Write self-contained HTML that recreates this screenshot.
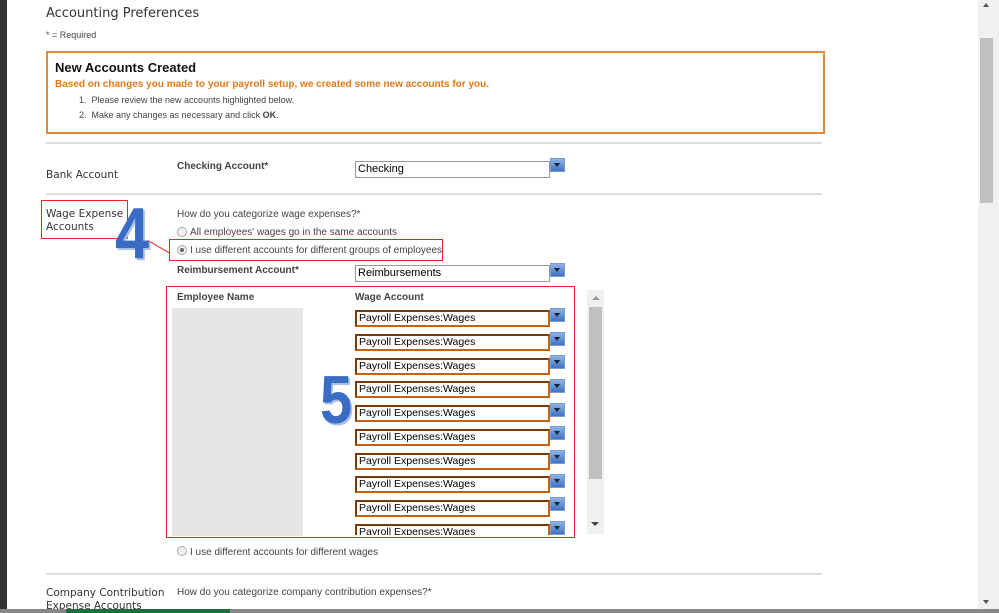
<!DOCTYPE html><html><head><style>
body{margin:0;width:999px;height:613px;overflow:hidden;background:#fff;font-family:"Liberation Sans",Arial,sans-serif;position:relative}
.a{position:absolute}
.s{font-size:10px;color:#444}
.lbl{font-size:10.5px;color:#333;font-family:"DejaVu Sans",sans-serif}
.hr{position:absolute;left:46px;width:776px;height:2px;background:#ddd}
.sel{position:absolute;left:355px;width:191px;height:15px;border:1px solid #999;font-size:11px;line-height:15px;padding-left:2px;color:#000}
.o{border:2px solid #c5620c;border-top-color:#7a3a0a;border-left-color:#7a3a0a;height:13px;width:189px;line-height:13px;font-size:10.5px}
.btn{position:absolute;left:550px;width:13px;height:12px;background:linear-gradient(#8fb3e6,#3f72c4);border:1px solid #7a9ccc}
.btn:after{content:"";position:absolute;left:3px;top:4px;border:3.5px solid transparent;border-top:4px solid #123;border-bottom:0}
.rad{position:absolute;width:8px;height:8px;border-radius:50%;border:1px solid #aaa;background:#f0f0f0}
</style></head><body>
<div class="a" style="left:0;top:0;width:7px;height:613px;background:#333"></div>
<div class="a lbl" style="left:46px;top:6px;font-size:13px">Accounting Preferences</div>
<div class="a s" style="left:46px;top:30px;font-size:9px">* = Required</div>
<div class="a" style="left:46px;top:51px;width:775px;height:79px;border:2px solid #e08a3c"></div>
<div class="a" style="left:55px;top:60px;font-size:13px;font-weight:bold;color:#111">New Accounts Created</div>
<div class="a" style="left:55px;top:79px;font-size:10px;font-weight:bold;color:#e07a1a">Based on changes you made to your payroll setup, we created some new accounts for you.</div>
<div class="a s" style="left:79px;top:95px;font-size:9px">1.&nbsp; Please review the new accounts highlighted below.</div>
<div class="a s" style="left:79px;top:110px;font-size:9px">2.&nbsp; Make any changes as necessary and click <b>OK</b>.</div>
<div class="hr" style="top:142px"></div>
<div class="a lbl" style="left:46px;top:169px">Bank Account</div>
<div class="a s" style="left:177px;top:161px;font-weight:bold">Checking Account*</div>
<div class="sel" style="top:161px">Checking</div><div class="btn" style="top:158px"></div>
<div class="hr" style="top:193px"></div>
<div class="a" style="left:41px;top:200px;width:85px;height:37px;border:1px solid #e22"></div>
<div class="a lbl" style="left:46px;top:208px;line-height:13px">Wage Expense<br>Accounts</div>
<div class="a" style="left:115px;top:198px;font-size:72px;font-weight:bold;color:#3a6cc4;text-shadow:2px 2px 0 #a8c0ea;line-height:72px;transform:scaleX(.85);transform-origin:0 0">4</div>
<div class="a" style="left:148px;top:240px;width:26px;height:1px;background:#e22;transform:rotate(30deg);transform-origin:0 0"></div>
<div class="a s" style="left:177px;top:209px">How do you categorize wage expenses?*</div>
<div class="rad" style="left:177px;top:227px"></div><div class="a s" style="left:190px;top:227px">All employees' wages go in the same accounts</div>
<div class="a" style="left:169px;top:239px;width:272px;height:20px;border:1px solid #e22"></div>
<div class="rad" style="left:177px;top:245px"></div><div class="a" style="left:180px;top:248px;width:4px;height:4px;border-radius:50%;background:#666"></div>
<div class="a s" style="left:190px;top:245px">I use different accounts for different groups of employees</div>
<div class="a s" style="left:177px;top:265px;font-weight:bold">Reimbursement Account*</div>
<div class="sel" style="top:265px">Reimbursements</div><div class="btn" style="top:263px"></div>
<div class="a" style="left:166px;top:286px;width:407px;height:250px;border:1px solid #e22"></div>
<div class="a s" style="left:177px;top:292px;font-weight:bold">Employee Name</div>
<div class="a s" style="left:355px;top:292px;font-weight:bold">Wage Account</div>
<div class="a" style="left:172px;top:308px;width:131px;height:228px;background:#e6e6e6"></div>
<div class="a" style="left:320px;top:366px;font-size:68px;font-weight:bold;color:#3a6cc4;text-shadow:2px 2px 0 #a8c0ea;line-height:68px;transform:scaleX(.85);transform-origin:0 0">5</div>
<div class="a" style="left:355px;top:308px;width:220px;height:227px;overflow:hidden">
<div style="position:relative">
<div class="sel o" style="left:0;top:2px">Payroll Expenses:Wages</div><div class="btn" style="left:195px;top:0"></div>
<div class="sel o" style="left:0;top:26px">Payroll Expenses:Wages</div><div class="btn" style="left:195px;top:24px"></div>
<div class="sel o" style="left:0;top:50px">Payroll Expenses:Wages</div><div class="btn" style="left:195px;top:47px"></div>
<div class="sel o" style="left:0;top:73px">Payroll Expenses:Wages</div><div class="btn" style="left:195px;top:71px"></div>
<div class="sel o" style="left:0;top:97px">Payroll Expenses:Wages</div><div class="btn" style="left:195px;top:95px"></div>
<div class="sel o" style="left:0;top:121px">Payroll Expenses:Wages</div><div class="btn" style="left:195px;top:118px"></div>
<div class="sel o" style="left:0;top:145px">Payroll Expenses:Wages</div><div class="btn" style="left:195px;top:142px"></div>
<div class="sel o" style="left:0;top:168px">Payroll Expenses:Wages</div><div class="btn" style="left:195px;top:166px"></div>
<div class="sel o" style="left:0;top:192px">Payroll Expenses:Wages</div><div class="btn" style="left:195px;top:189px"></div>
<div class="sel o" style="left:0;top:216px">Payroll Expenses:Wages</div><div class="btn" style="left:195px;top:213px"></div>
</div></div>
<div class="a" style="left:587px;top:290px;width:17px;height:244px;background:#f0f0f0"></div>
<div class="a" style="left:589px;top:307px;width:13px;height:172px;background:#c0c0c0"></div>
<div class="a" style="left:592px;top:296px;border:4px solid transparent;border-bottom:4px solid #999;border-top:0"></div>
<div class="a" style="left:591px;top:522px;border:4px solid transparent;border-top:4px solid #444;border-bottom:0"></div>
<div class="rad" style="left:177px;top:546px"></div><div class="a s" style="left:190px;top:547px">I use different accounts for different wages</div>
<div class="hr" style="top:573px"></div>
<div class="a lbl" style="left:46px;top:587px;line-height:13px">Company Contribution<br>Expense Accounts</div>
<div class="a s" style="left:177px;top:587px">How do you categorize company contribution expenses?*</div>
<div class="a" style="left:0;top:609px;width:999px;height:4px;background:#888"></div>
<div class="a" style="left:66px;top:609px;width:164px;height:4px;background:#1e6e3c"></div>
<div class="a" style="left:978px;top:0;width:21px;height:609px;background:#f0f0f0"></div>
<div class="a" style="left:980px;top:38px;width:13px;height:165px;background:#c0c0c0"></div>
<div class="a" style="left:983px;top:3px;border:3.5px solid transparent;border-bottom:4px solid #555;border-top:0"></div>
<div class="a" style="left:983px;top:600px;border:3.5px solid transparent;border-top:4px solid #555;border-bottom:0"></div>
</body></html>
